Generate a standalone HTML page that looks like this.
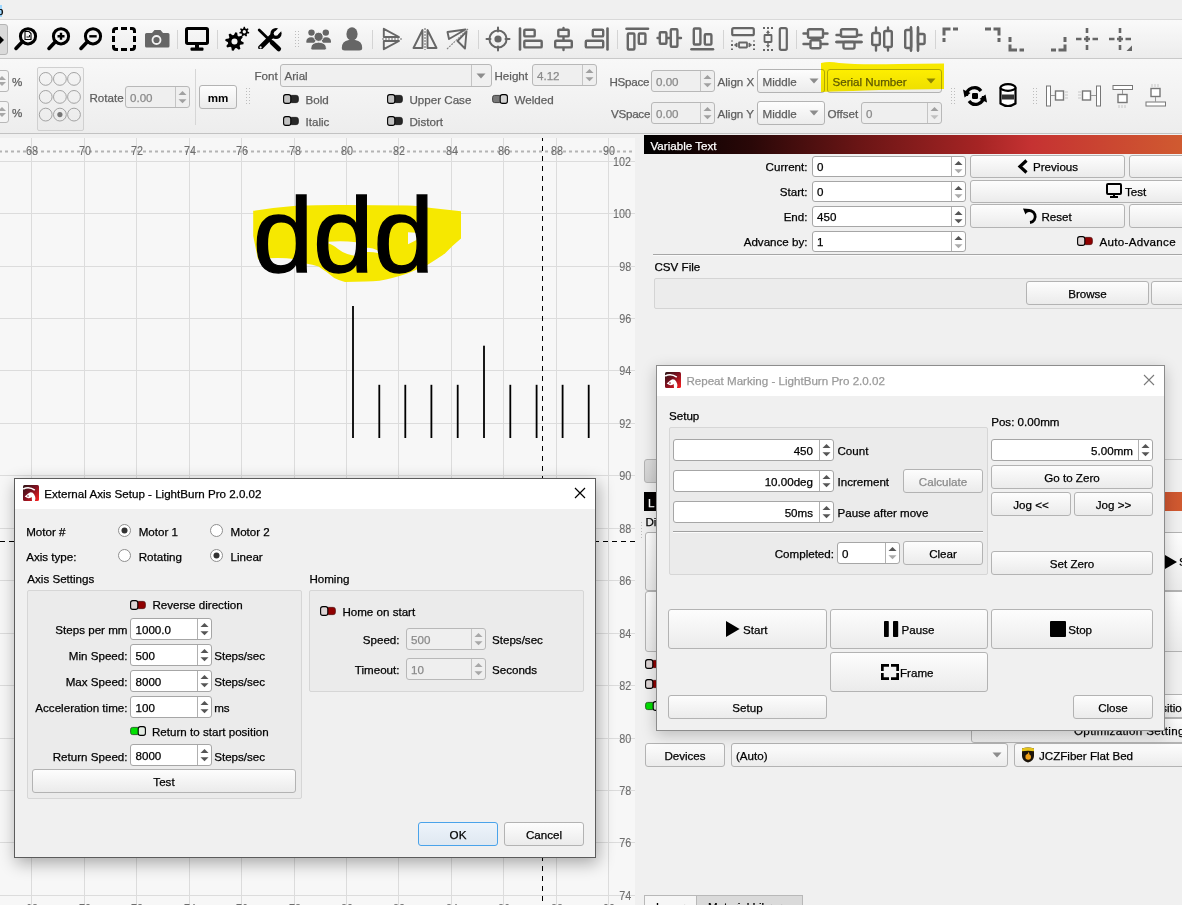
<!DOCTYPE html>
<html><head><meta charset="utf-8"><style>
html,body{margin:0;padding:0;}
body{width:1182px;height:905px;overflow:hidden;position:relative;background:#f0f0f0;font-family:"Liberation Sans", sans-serif;}
.a{position:absolute;display:block;}
.t{position:absolute;white-space:nowrap;font-family:"Liberation Sans", sans-serif;-webkit-text-stroke:0.25px currentColor;}
svg{overflow:visible;}
</style></head><body>
<div class="a" style="left:0px;top:0px;width:1182px;height:19px;background:#f0f0f0;"></div>
<div class="a" style="left:0px;top:5px;width:2px;height:12px;background:#9fd8ff;"></div>
<div class="t" style="top:4.68px;font-size:11.6px;line-height:11.6px;color:#000;left:-3.00px;">p</div>
<div class="a" style="left:0px;top:19px;width:1182px;height:1px;background:#d9d9d9;"></div>
<div class="a" style="left:0px;top:20px;width:1182px;height:38px;background:linear-gradient(#fafafa,#ececec);"></div>
<div class="a" style="left:0px;top:58px;width:1182px;height:1px;background:#c9c9c9;"></div>
<div class="a" style="left:-10px;top:24px;width:18px;height:31px;background:#dadada;border:1px solid #b5b5b5;border-radius:3px;box-sizing:border-box;"></div>
<svg class="a" style="left:0px;top:36px;" width="5" height="8" viewBox="0 0 5 8"><path d="M0 0 L4 4 L0 8 Z" fill="#000"/></svg>
<svg class="a" style="left:12.600000000000001px;top:24px;" width="30" height="30" viewBox="0 0 30 30"><circle cx="15" cy="12.3" r="7.6" fill="none" stroke="#000" stroke-width="3"/><path d="M9.6 17.6 L3 24.4" stroke="#000" stroke-width="3.6" stroke-linecap="round"/><path d="M12 7.5 h4 l2 2 v6 h-6 z" fill="none" stroke="#000" stroke-width="1.1"/><path d="M13.5 13 h3 v-2" fill="none" stroke="#000" stroke-width="0.9"/></svg>
<svg class="a" style="left:45.6px;top:24px;" width="30" height="30" viewBox="0 0 30 30"><circle cx="15" cy="12.3" r="7.6" fill="none" stroke="#000" stroke-width="3"/><path d="M9.6 17.6 L3 24.4" stroke="#000" stroke-width="3.6" stroke-linecap="round"/><path d="M15 8.8 v7 M11.5 12.3 h7" stroke="#000" stroke-width="2.4"/></svg>
<svg class="a" style="left:78.3px;top:24px;" width="30" height="30" viewBox="0 0 30 30"><circle cx="15" cy="12.3" r="7.6" fill="none" stroke="#000" stroke-width="3"/><path d="M9.6 17.6 L3 24.4" stroke="#000" stroke-width="3.6" stroke-linecap="round"/><path d="M11.3 12.3 h7.4" stroke="#000" stroke-width="2.4"/></svg>
<svg class="a" style="left:112px;top:27px;" width="24" height="24" viewBox="0 0 24 24"><path d="M1.5 6 V4 Q1.5 1.5 4 1.5 H6 M9 1.5 H15 M18 1.5 H20 Q22.5 1.5 22.5 4 V6 M22.5 9 V15 M22.5 18 V20 Q22.5 22.5 20 22.5 H18 M15 22.5 H9 M6 22.5 H4 Q1.5 22.5 1.5 20 V18 M1.5 15 V9" fill="none" stroke="#000" stroke-width="3"/></svg>
<svg class="a" style="left:144px;top:28px;" width="26" height="21" viewBox="0 0 26 21"><path d="M2 5 h6 l2.5 -3 h6 l2.5 3 h5 q1.5 0 1.5 1.5 v11.5 q0 1.5 -1.5 1.5 h-21.5 q-1.5 0 -1.5 -1.5 v-11.5 q0 -1.5 1.5 -1.5 z" fill="#666"/><circle cx="12.5" cy="12" r="4" fill="none" stroke="#f4f4f4" stroke-width="1.8"/></svg>
<div class="a" style="left:177px;top:30px;width:1px;height:19px;background:#d4d4d4;"></div>
<svg class="a" style="left:185px;top:27px;" width="24" height="24" viewBox="0 0 24 24"><rect x="1.5" y="1.5" width="21" height="15" rx="1.2" fill="none" stroke="#000" stroke-width="3"/><rect x="10" y="17" width="4" height="4" fill="#000"/><rect x="5.5" y="20.5" width="13" height="3.3" rx="1" fill="#000"/></svg>
<div class="a" style="left:217px;top:30px;width:1px;height:19px;background:#d4d4d4;"></div>
<svg class="a" style="left:225px;top:27px;" width="25" height="24" viewBox="0 0 25 24"><polygon points="18.76,15.51 18.40,17.30 15.32,17.71 14.60,18.79 15.40,21.79 13.88,22.80 11.42,20.92 10.15,21.17 8.59,23.86 6.80,23.50 6.39,20.42 5.31,19.70 2.31,20.50 1.30,18.98 3.18,16.52 2.93,15.25 0.24,13.69 0.60,11.90 3.68,11.49 4.40,10.41 3.60,7.41 5.12,6.40 7.58,8.28 8.85,8.03 10.41,5.34 12.20,5.70 12.61,8.78 13.69,9.50 16.69,8.70 17.70,10.22 15.82,12.68 16.07,13.95" fill="#000"/><circle cx="9.5" cy="14.6" r="3.0" fill="#f3f3f3"/><polygon points="24.27,5.36 24.02,6.45 22.18,6.61 21.70,7.20 21.96,9.03 20.95,9.52 19.68,8.18 18.92,8.18 17.65,9.52 16.64,9.03 16.90,7.20 16.42,6.61 14.58,6.45 14.33,5.36 15.92,4.42 16.09,3.68 15.07,2.14 15.76,1.26 17.49,1.92 18.18,1.59 18.74,-0.17 19.86,-0.17 20.42,1.59 21.11,1.92 22.84,1.26 23.53,2.14 22.51,3.68 22.68,4.42" fill="#000"/><circle cx="19.3" cy="4.8" r="1.7" fill="#f3f3f3"/></svg>
<svg class="a" style="left:257px;top:27px;" width="26" height="24" viewBox="0 0 26 24"><defs><mask id="wm"><rect x="-5" y="-5" width="40" height="40" fill="#fff"/><path d="M19 6.5 L30 -4.5" stroke="#000" stroke-width="4.2"/><circle cx="19" cy="6.5" r="2.3" fill="#000"/></mask></defs><path d="M2.2 3 L14 14.5" stroke="#000" stroke-width="2.8" stroke-linecap="round"/><path d="M15 15.5 L21.8 22" stroke="#000" stroke-width="4.6" stroke-linecap="round"/><g mask="url(#wm)"><path d="M3.5 20.5 L16 8" stroke="#000" stroke-width="4.6" stroke-linecap="round"/><circle cx="19" cy="6.5" r="5.6" fill="#000"/></g><circle cx="3.6" cy="20.4" r="1.1" fill="#f3f3f3"/></svg>
<svg class="a" style="left:295px;top:31px;" width="4" height="17" viewBox="0 0 4 17"><rect x="0" y="0" width="1" height="1" fill="#bdbdbd"/><rect x="3" y="0" width="1" height="1" fill="#bdbdbd"/><rect x="0" y="3" width="1" height="1" fill="#bdbdbd"/><rect x="3" y="3" width="1" height="1" fill="#bdbdbd"/><rect x="0" y="6" width="1" height="1" fill="#bdbdbd"/><rect x="3" y="6" width="1" height="1" fill="#bdbdbd"/><rect x="0" y="9" width="1" height="1" fill="#bdbdbd"/><rect x="3" y="9" width="1" height="1" fill="#bdbdbd"/><rect x="0" y="12" width="1" height="1" fill="#bdbdbd"/><rect x="3" y="12" width="1" height="1" fill="#bdbdbd"/><rect x="0" y="15" width="1" height="1" fill="#bdbdbd"/><rect x="3" y="15" width="1" height="1" fill="#bdbdbd"/></svg>
<svg class="a" style="left:306px;top:28px;" width="26" height="22" viewBox="0 0 26 22"><circle cx="5.5" cy="4.6" r="3.2" fill="#666"/><path d="M0.3 13.5 q0-4 5-4.2 q3.8 0 4.5 3 l-1.5 2.5 h-7.6 q-.5 0-.4-1.3z" fill="#666"/><circle cx="19.8" cy="4.6" r="3.2" fill="#666"/><path d="M25 13.5 q0-4-5-4.2 q-3.8 0-4.5 3 l1.5 2.5 h7.6 q.5 0 .4-1.3z" fill="#666"/><circle cx="12.6" cy="8.8" r="4.6" fill="#666" stroke="#f4f4f4" stroke-width="1"/><path d="M4.8 20.5 q0-6 7.8-6.3 q7.8 .3 7.8 6.3 q0 1.5-2 1.5 h-11.6 q-2 0-2-1.5z" fill="#666" stroke="#f4f4f4" stroke-width="0.8"/></svg>
<svg class="a" style="left:341px;top:27px;" width="22" height="24" viewBox="0 0 22 24"><ellipse cx="11" cy="7" rx="5.6" ry="6.8" fill="#666"/><path d="M0.8 21 q0-7 7-8 h6.4 q7 1 7 8 q0 2.5-3 2.5 h-14.4 q-3 0-3-2.5z" fill="#666"/></svg>
<div class="a" style="left:372px;top:30px;width:1px;height:19px;background:#d4d4d4;"></div>
<svg class="a" style="left:382px;top:27px;" width="21" height="24" viewBox="0 0 21 24"><path d="M1.8 1.8 L17 10 H1.8 Z" fill="none" stroke="#666" stroke-width="1.9" stroke-linejoin="round"/><path d="M1.8 22.2 L17 14 H1.8 Z" fill="none" stroke="#666" stroke-width="1.9" stroke-linejoin="round"/><path d="M0 12 H20" stroke="#999" stroke-width="1.6" stroke-dasharray="2 1"/></svg>
<svg class="a" style="left:412px;top:28px;" width="26" height="22" viewBox="0 0 26 22"><path d="M10.5 2 V20 H1.5 Z" fill="none" stroke="#666" stroke-width="1.9" stroke-linejoin="round"/><path d="M15.5 2 V20 H24.5 Z" fill="none" stroke="#666" stroke-width="1.9" stroke-linejoin="round"/><path d="M13 0 V22" stroke="#999" stroke-width="1.6" stroke-dasharray="2 1"/></svg>
<svg class="a" style="left:446px;top:28px;" width="24" height="22" viewBox="0 0 24 22"><path d="M1.5 4 L19.5 1.5 L3 11 Z" fill="none" stroke="#666" stroke-width="1.9" stroke-linejoin="round"/><path d="M20.5 3.5 L11.5 13 L19 20.5 Z" fill="none" stroke="#666" stroke-width="1.9" stroke-linejoin="round"/><path d="M1 21 L22 1" stroke="#888" stroke-width="1.1" stroke-dasharray="2 1"/></svg>
<div class="a" style="left:478px;top:30px;width:1px;height:19px;background:#d4d4d4;"></div>
<svg class="a" style="left:486px;top:27px;" width="24" height="24" viewBox="0 0 24 24"><circle cx="12" cy="12" r="8.6" fill="none" stroke="#666" stroke-width="2"/><circle cx="12" cy="12" r="3.6" fill="#666"/><path d="M12 0.5 V4.5 M12 19.5 V23.5 M0.5 12 H4.5 M19.5 12 H23.5" stroke="#666" stroke-width="2" stroke-linecap="round"/></svg>
<svg class="a" style="left:518px;top:27px;" width="26" height="24" viewBox="0 0 26 24"><path d="M2 1.5 V22.5" stroke="#666" stroke-width="2.6" stroke-linecap="round"/><rect x="6.3" y="2.8" width="10.4" height="6.6" rx="1" fill="none" stroke="#666" stroke-width="2.4"/><rect x="6.3" y="13.8" width="17.4" height="6.6" rx="1" fill="none" stroke="#666" stroke-width="2.4"/></svg>
<svg class="a" style="left:554px;top:27px;" width="20" height="24" viewBox="0 0 20 24"><path d="M9.5 1 V23" stroke="#666" stroke-width="2.4" stroke-linecap="round"/><rect x="4.3" y="2.8" width="10.4" height="6.6" rx="1" fill="#f3f3f3" stroke="#666" stroke-width="2.4"/><rect x="1.2" y="13.8" width="16.6" height="6.6" rx="1" fill="#f3f3f3" stroke="#666" stroke-width="2.4"/></svg>
<svg class="a" style="left:584px;top:27px;" width="26" height="24" viewBox="0 0 26 24"><path d="M23.5 1.5 V22.5" stroke="#666" stroke-width="2.6" stroke-linecap="round"/><rect x="8.8" y="2.8" width="10.4" height="6.6" rx="1" fill="none" stroke="#666" stroke-width="2.4"/><rect x="1.8" y="13.8" width="17.4" height="6.6" rx="1" fill="none" stroke="#666" stroke-width="2.4"/></svg>
<div class="a" style="left:617px;top:30px;width:1px;height:19px;background:#d4d4d4;"></div>
<svg class="a" style="left:625px;top:27px;" width="25" height="24" viewBox="0 0 25 24"><path d="M1.5 1.8 H23" stroke="#666" stroke-width="2.6" stroke-linecap="round"/><rect x="2.8" y="6.5" width="6.6" height="16" rx="1" fill="none" stroke="#666" stroke-width="2.4"/><rect x="13.8" y="6.5" width="6.6" height="10.4" rx="1" fill="none" stroke="#666" stroke-width="2.4"/></svg>
<svg class="a" style="left:657px;top:28px;" width="25" height="21" viewBox="0 0 25 21"><path d="M0.5 10 H24" stroke="#666" stroke-width="2.4" stroke-linecap="round"/><rect x="2.8" y="4.2" width="6.6" height="11.6" rx="1" fill="#f3f3f3" stroke="#666" stroke-width="2.4"/><rect x="13.8" y="1.2" width="6.6" height="17.6" rx="1" fill="#f3f3f3" stroke="#666" stroke-width="2.4"/></svg>
<svg class="a" style="left:690px;top:27px;" width="25" height="24" viewBox="0 0 25 24"><path d="M1.5 22.2 H23" stroke="#666" stroke-width="2.6" stroke-linecap="round"/><rect x="3.8" y="1.5" width="6.6" height="16" rx="1" fill="none" stroke="#666" stroke-width="2.4"/><rect x="14.8" y="7.2" width="6.6" height="10.4" rx="1" fill="none" stroke="#666" stroke-width="2.4"/></svg>
<div class="a" style="left:723px;top:30px;width:1px;height:19px;background:#d4d4d4;"></div>
<svg class="a" style="left:731px;top:27px;" width="24" height="24" viewBox="0 0 24 24"><rect x="1.2" y="1.2" width="21.6" height="7" rx="1.5" fill="none" stroke="#666" stroke-width="2.2"/><rect x="8" y="15.5" width="8" height="5" rx="0.5" fill="none" stroke="#666" stroke-width="1.8"/><path d="M1 13.5 V14.5 M1 17 V19 M1 21.5 V23 M23 13.5 V14.5 M23 17 V19 M23 21.5 V23" stroke="#666" stroke-width="2"/><path d="M3.5 18 L6 16 V20 Z M20.5 18 L18 16 V20 Z" fill="#666" stroke="#666" stroke-width="1"/></svg>
<svg class="a" style="left:763px;top:27px;" width="25" height="24" viewBox="0 0 25 24"><rect x="16.8" y="1.2" width="7" height="21.6" rx="1.5" fill="none" stroke="#666" stroke-width="2.2"/><rect x="1.5" y="8" width="7" height="7" rx="0.5" fill="none" stroke="#666" stroke-width="1.8"/><path d="M0 1 H2 M4 1 H6 M8 1 H10 M0 23 H2 M4 23 H6 M8 23 H10" stroke="#666" stroke-width="2"/><path d="M5 3 L3 6 H7 Z M5 21 L3 18 H7 Z" fill="#666"/><path d="M5 5 V8 M5 15 V19" stroke="#666" stroke-width="1.4"/></svg>
<div class="a" style="left:796px;top:30px;width:1px;height:19px;background:#d4d4d4;"></div>
<svg class="a" style="left:803px;top:28px;" width="25" height="22" viewBox="0 0 25 22"><path d="M0.5 5.5 H24.5 M0.5 16 H24.5" stroke="#666" stroke-width="2.4" stroke-linecap="round"/><rect x="5" y="1.2" width="15" height="8.6" rx="1.5" fill="#f3f3f3" stroke="#666" stroke-width="2.4"/><rect x="7.5" y="12.2" width="10" height="8" rx="1.5" fill="#f3f3f3" stroke="#666" stroke-width="2.4"/></svg>
<svg class="a" style="left:836px;top:28px;" width="26" height="22" viewBox="0 0 26 22"><path d="M0.5 7 H25.5 M0.5 14 H25.5" stroke="#666" stroke-width="2.4" stroke-linecap="round"/><rect x="5" y="1.2" width="16" height="7.6" rx="1.5" fill="#f3f3f3" stroke="#666" stroke-width="2.4"/><rect x="7.5" y="14" width="11" height="6.6" rx="1.5" fill="#f3f3f3" stroke="#666" stroke-width="2.4"/><path d="M0.5 14 H25.5" stroke="#666" stroke-width="2.4" stroke-linecap="round"/></svg>
<svg class="a" style="left:871px;top:27px;" width="23" height="24" viewBox="0 0 23 24"><path d="M5 0.5 V23.5 M17 0.5 V23.5" stroke="#666" stroke-width="2.4" stroke-linecap="round"/><rect x="1.2" y="6" width="7.6" height="12" rx="1.5" fill="#f3f3f3" stroke="#666" stroke-width="2.4"/><rect x="13.2" y="4" width="7.6" height="16" rx="1.5" fill="#f3f3f3" stroke="#666" stroke-width="2.4"/></svg>
<svg class="a" style="left:904px;top:27px;" width="23" height="24" viewBox="0 0 23 24"><path d="M7 0.5 V23.5 M14 0.5 V23.5" stroke="#666" stroke-width="2.4" stroke-linecap="round"/><rect x="1.2" y="3" width="6" height="18" rx="1.5" fill="#f3f3f3" stroke="#666" stroke-width="2.4"/><rect x="14" y="7" width="6.6" height="10" rx="1.5" fill="#f3f3f3" stroke="#666" stroke-width="2.4"/><path d="M7 0.5 V23.5 M14 0.5 V23.5" stroke="#666" stroke-width="2.4" stroke-linecap="round"/></svg>
<div class="a" style="left:935px;top:30px;width:1px;height:19px;background:#d4d4d4;"></div>
<svg class="a" style="left:942px;top:27px;" width="17" height="16" viewBox="0 0 17 16"><path d="M2 15 V11 M2 8.5 V2 H8.5 M11 2 H16" stroke="#666" stroke-width="3" fill="none"/></svg>
<svg class="a" style="left:984px;top:27px;" width="17" height="16" viewBox="0 0 17 16"><path d="M1 2 H7 M9.5 2 H15 V8.5 M15 11 V15" stroke="#666" stroke-width="3" fill="none"/></svg>
<svg class="a" style="left:1008px;top:36px;" width="17" height="16" viewBox="0 0 17 16"><path d="M2 1 V6 M2 8.5 V14 H9 M11.5 14 H16" stroke="#666" stroke-width="3" fill="none"/></svg>
<svg class="a" style="left:1050px;top:36px;" width="17" height="16" viewBox="0 0 17 16"><path d="M15 1 V6 M15 8.5 V14 H8.5 M6 14 H1" stroke="#666" stroke-width="3" fill="none"/></svg>
<svg class="a" style="left:1075px;top:27px;" width="24" height="24" viewBox="0 0 24 24"><path d="M12 1 V6 M12 9 V15 M12 18 V23 M1 12 H6.5 M9 12 H15 M17.5 12 H23" stroke="#666" stroke-width="2.6" fill="none"/></svg>
<svg class="a" style="left:1108px;top:27px;" width="25" height="24" viewBox="0 0 25 24"><path d="M12 1 V6 M12 9 V15 M12 18 V23 M1 12 H6.5 M9 12 H15 M17.5 12 H23" stroke="#666" stroke-width="2.6" fill="none"/><path d="M24 18.5 V24 H18.5 Z" fill="#666"/></svg>
<div class="a" style="left:0px;top:59px;width:1182px;height:74px;background:linear-gradient(#f8f8f8,#ededed);"></div>
<div class="a" style="left:0px;top:133px;width:1182px;height:1px;background:#c2c2c2;"></div>
<div class="a" style="left:0px;top:134px;width:1182px;height:4px;background:#f0f0f0;"></div>
<div class="a" style="left:-40px;top:70px;width:49px;height:22px;background:#f4f4f4;border:1px solid #b8b8b8;border-radius:3px;box-sizing:border-box;"></div>
<svg class="a" style="left:-2px;top:75px;" width="8" height="12" viewBox="0 0 8 12"><path d="M0 5 L4 1 L8 5 Z M0 7 L8 7 L4 11 Z" fill="#a8a8a8"/></svg>
<div class="t" style="top:76.18px;font-size:11.6px;line-height:11.6px;color:#5e5e5e;left:12.00px;">%</div>
<div class="a" style="left:-40px;top:101px;width:49px;height:22px;background:#f4f4f4;border:1px solid #b8b8b8;border-radius:3px;box-sizing:border-box;"></div>
<svg class="a" style="left:-2px;top:106px;" width="8" height="12" viewBox="0 0 8 12"><path d="M0 5 L4 1 L8 5 Z M0 7 L8 7 L4 11 Z" fill="#a8a8a8"/></svg>
<div class="t" style="top:107.18px;font-size:11.6px;line-height:11.6px;color:#5e5e5e;left:12.00px;">%</div>
<div class="a" style="left:37px;top:67px;width:47px;height:64px;background:linear-gradient(#f4f4f4,#ebebeb);border:1px solid #d0d0d0;border-radius:2px;box-sizing:border-box;"></div>
<svg class="a" style="left:37px;top:67px;" width="47" height="64" viewBox="0 0 47 64"><circle cx="8.7" cy="11.9" r="6.4" fill="none" stroke="#9a9a9a" stroke-width="0.9"/><circle cx="22.9" cy="11.9" r="6.4" fill="none" stroke="#9a9a9a" stroke-width="0.9"/><circle cx="37" cy="11.9" r="6.4" fill="none" stroke="#9a9a9a" stroke-width="0.9"/><circle cx="8.7" cy="29.9" r="6.4" fill="none" stroke="#9a9a9a" stroke-width="0.9"/><circle cx="22.9" cy="29.9" r="6.4" fill="none" stroke="#9a9a9a" stroke-width="0.9"/><circle cx="37" cy="29.9" r="6.4" fill="none" stroke="#9a9a9a" stroke-width="0.9"/><circle cx="8.7" cy="47.6" r="6.4" fill="none" stroke="#9a9a9a" stroke-width="0.9"/><circle cx="22.9" cy="47.6" r="6.4" fill="none" stroke="#9a9a9a" stroke-width="0.9"/><circle cx="37" cy="47.6" r="6.4" fill="none" stroke="#9a9a9a" stroke-width="0.9"/><circle cx="22.9" cy="47.6" r="2.6" fill="#777"/></svg>
<div class="t" style="top:92.18px;font-size:11.6px;line-height:11.6px;color:#5e5e5e;left:89.50px;">Rotate</div>
<div class="a" style="left:125px;top:86px;width:65px;height:22px;background:#efefef;border:1px solid #b8b8b8;border-radius:3px;box-sizing:border-box;"></div>
<div class="a" style="left:175px;top:87px;width:1px;height:20px;background:#c4c4c4;"></div>
<svg class="a" style="left:178.0px;top:91.0px;" width="9" height="12" viewBox="0 0 9 12"><path d="M0.5 4 L4.5 0 L8.5 4 Z" fill="#a0a0a0"/><path d="M0.5 8.3 L8.5 8.3 L4.5 12.3 Z" fill="#a0a0a0"/></svg>
<div class="t" style="top:91.68px;font-size:11.6px;line-height:11.6px;color:#8a8a8a;left:130.00px;">0.00</div>
<div class="a" style="left:195px;top:69px;width:1px;height:56px;background:#d6d6d6;"></div>
<div class="a" style="left:199px;top:85px;width:38px;height:24px;background:linear-gradient(#fdfdfd,#ebebeb);border:1px solid #b3b3b3;border-radius:3px;box-sizing:border-box;"></div>
<div class="t" style="top:91.68px;font-size:11.6px;line-height:11.6px;color:#000;font-weight:bold;left:-82.00px;width:600px;text-align:center;-webkit-text-stroke:0;">mm</div>
<svg class="a" style="left:246px;top:88px;" width="4" height="17" viewBox="0 0 4 17"><rect x="0" y="0" width="1" height="1" fill="#bdbdbd"/><rect x="3" y="0" width="1" height="1" fill="#bdbdbd"/><rect x="0" y="3" width="1" height="1" fill="#bdbdbd"/><rect x="3" y="3" width="1" height="1" fill="#bdbdbd"/><rect x="0" y="6" width="1" height="1" fill="#bdbdbd"/><rect x="3" y="6" width="1" height="1" fill="#bdbdbd"/><rect x="0" y="9" width="1" height="1" fill="#bdbdbd"/><rect x="3" y="9" width="1" height="1" fill="#bdbdbd"/><rect x="0" y="12" width="1" height="1" fill="#bdbdbd"/><rect x="3" y="12" width="1" height="1" fill="#bdbdbd"/><rect x="0" y="15" width="1" height="1" fill="#bdbdbd"/><rect x="3" y="15" width="1" height="1" fill="#bdbdbd"/></svg>
<div class="t" style="top:69.88px;font-size:11.6px;line-height:11.6px;color:#5e5e5e;left:254.50px;">Font</div>
<div class="a" style="left:280px;top:64px;width:212px;height:23px;background:#f0f0f0;border:1px solid #b8b8b8;border-radius:3px;box-sizing:border-box;"></div>
<div class="a" style="left:471px;top:65px;width:1px;height:21px;background:#c4c4c4;"></div>
<svg class="a" style="left:476px;top:72.5px;" width="10" height="6" viewBox="0 0 10 6"><path d="M0.5 0.5 L9.5 0.5 L5 5.5 Z" fill="#8c8c8c"/></svg>
<div class="t" style="top:70.18px;font-size:11.6px;line-height:11.6px;color:#5e5e5e;left:284.50px;">Arial</div>
<div class="t" style="top:69.88px;font-size:11.6px;line-height:11.6px;color:#5e5e5e;left:494.50px;">Height</div>
<div class="a" style="left:532px;top:64px;width:65px;height:22px;background:#efefef;border:1px solid #b8b8b8;border-radius:3px;box-sizing:border-box;"></div>
<div class="a" style="left:582px;top:65px;width:1px;height:20px;background:#c4c4c4;"></div>
<svg class="a" style="left:585.0px;top:69.0px;" width="9" height="12" viewBox="0 0 9 12"><path d="M0.5 4 L4.5 0 L8.5 4 Z" fill="#a0a0a0"/><path d="M0.5 8.3 L8.5 8.3 L4.5 12.3 Z" fill="#a0a0a0"/></svg>
<div class="t" style="top:69.68px;font-size:11.6px;line-height:11.6px;color:#8a8a8a;left:537.00px;">4.12</div>
<svg class="a" style="left:283px;top:94px;" width="16" height="10" viewBox="0 0 16 10"><rect x="6.5" y="1.4" width="8.8" height="7.2" rx="2" fill="#282828" stroke="#1a1a1a" stroke-width="0.9"/><rect x="0.6" y="0.6" width="7.2" height="8.8" rx="2.2" fill="#c2c2c2" stroke="#000" stroke-width="1.1"/></svg>
<div class="t" style="top:93.68px;font-size:11.6px;line-height:11.6px;color:#5e5e5e;left:305.50px;">Bold</div>
<svg class="a" style="left:283px;top:116px;" width="16" height="10" viewBox="0 0 16 10"><rect x="6.5" y="1.4" width="8.8" height="7.2" rx="2" fill="#282828" stroke="#1a1a1a" stroke-width="0.9"/><rect x="0.6" y="0.6" width="7.2" height="8.8" rx="2.2" fill="#c2c2c2" stroke="#000" stroke-width="1.1"/></svg>
<div class="t" style="top:115.68px;font-size:11.6px;line-height:11.6px;color:#5e5e5e;left:305.50px;">Italic</div>
<svg class="a" style="left:387px;top:94px;" width="16" height="10" viewBox="0 0 16 10"><rect x="6.5" y="1.4" width="8.8" height="7.2" rx="2" fill="#282828" stroke="#1a1a1a" stroke-width="0.9"/><rect x="0.6" y="0.6" width="7.2" height="8.8" rx="2.2" fill="#c2c2c2" stroke="#000" stroke-width="1.1"/></svg>
<div class="t" style="top:93.68px;font-size:11.6px;line-height:11.6px;color:#5e5e5e;left:409.50px;">Upper Case</div>
<svg class="a" style="left:387px;top:116px;" width="16" height="10" viewBox="0 0 16 10"><rect x="6.5" y="1.4" width="8.8" height="7.2" rx="2" fill="#282828" stroke="#1a1a1a" stroke-width="0.9"/><rect x="0.6" y="0.6" width="7.2" height="8.8" rx="2.2" fill="#c2c2c2" stroke="#000" stroke-width="1.1"/></svg>
<div class="t" style="top:115.68px;font-size:11.6px;line-height:11.6px;color:#5e5e5e;left:409.50px;">Distort</div>
<svg class="a" style="left:492px;top:94px;" width="16" height="10" viewBox="0 0 16 10"><rect x="0.6" y="1.4" width="8.8" height="7.2" rx="2" fill="#777" stroke="#333" stroke-width="0.9"/><rect x="8.2" y="0.6" width="7.2" height="8.8" rx="2.2" fill="#d4d4d4" stroke="#000" stroke-width="1.1"/></svg>
<div class="t" style="top:93.68px;font-size:11.6px;line-height:11.6px;color:#5e5e5e;left:514.50px;">Welded</div>
<div class="t" style="top:76.18px;font-size:11.6px;line-height:11.6px;color:#5e5e5e;letter-spacing:-0.25px;left:609.50px;">HSpace</div>
<div class="a" style="left:651px;top:70px;width:64px;height:22px;background:#efefef;border:1px solid #b8b8b8;border-radius:3px;box-sizing:border-box;"></div>
<div class="a" style="left:700px;top:71px;width:1px;height:20px;background:#c4c4c4;"></div>
<svg class="a" style="left:703.0px;top:75.0px;" width="9" height="12" viewBox="0 0 9 12"><path d="M0.5 4 L4.5 0 L8.5 4 Z" fill="#a0a0a0"/><path d="M0.5 8.3 L8.5 8.3 L4.5 12.3 Z" fill="#a0a0a0"/></svg>
<div class="t" style="top:75.68px;font-size:11.6px;line-height:11.6px;color:#8a8a8a;left:656.00px;">0.00</div>
<div class="t" style="top:107.88px;font-size:11.6px;line-height:11.6px;color:#5e5e5e;letter-spacing:-0.25px;left:611.00px;">VSpace</div>
<div class="a" style="left:651px;top:102px;width:64px;height:22px;background:#efefef;border:1px solid #b8b8b8;border-radius:3px;box-sizing:border-box;"></div>
<div class="a" style="left:700px;top:103px;width:1px;height:20px;background:#c4c4c4;"></div>
<svg class="a" style="left:703.0px;top:107.0px;" width="9" height="12" viewBox="0 0 9 12"><path d="M0.5 4 L4.5 0 L8.5 4 Z" fill="#a0a0a0"/><path d="M0.5 8.3 L8.5 8.3 L4.5 12.3 Z" fill="#a0a0a0"/></svg>
<div class="t" style="top:107.68px;font-size:11.6px;line-height:11.6px;color:#8a8a8a;left:656.00px;">0.00</div>
<div class="t" style="top:76.18px;font-size:11.6px;line-height:11.6px;color:#5e5e5e;left:717.50px;">Align X</div>
<div class="a" style="left:757px;top:69px;width:68px;height:24px;background:linear-gradient(#fdfdfd,#ececec);border:1px solid #b3b3b3;border-radius:3px;box-sizing:border-box;"></div>
<svg class="a" style="left:808.5px;top:78.0px;" width="10" height="6" viewBox="0 0 10 6"><path d="M0.5 0.5 L9.5 0.5 L5 5.5 Z" fill="#8c8c8c"/></svg>
<div class="t" style="top:75.68px;font-size:11.6px;line-height:11.6px;color:#5e5e5e;left:762.50px;">Middle</div>
<div class="t" style="top:107.88px;font-size:11.6px;line-height:11.6px;color:#5e5e5e;left:717.50px;">Align Y</div>
<div class="a" style="left:757px;top:101px;width:68px;height:24px;background:linear-gradient(#fdfdfd,#ececec);border:1px solid #b3b3b3;border-radius:3px;box-sizing:border-box;"></div>
<svg class="a" style="left:808.5px;top:110.0px;" width="10" height="6" viewBox="0 0 10 6"><path d="M0.5 0.5 L9.5 0.5 L5 5.5 Z" fill="#8c8c8c"/></svg>
<div class="t" style="top:107.68px;font-size:11.6px;line-height:11.6px;color:#5e5e5e;left:762.50px;">Middle</div>
<div class="t" style="top:107.68px;font-size:11.6px;line-height:11.6px;color:#5e5e5e;left:827.50px;">Offset</div>
<div class="a" style="left:861px;top:102px;width:81px;height:22px;background:#efefef;border:1px solid #b8b8b8;border-radius:3px;box-sizing:border-box;"></div>
<div class="a" style="left:927px;top:103px;width:1px;height:20px;background:#c4c4c4;"></div>
<svg class="a" style="left:930.0px;top:107.0px;" width="9" height="12" viewBox="0 0 9 12"><path d="M0.5 4 L4.5 0 L8.5 4 Z" fill="#a0a0a0"/><path d="M0.5 8.3 L8.5 8.3 L4.5 12.3 Z" fill="#c0c0c0"/></svg>
<div class="t" style="top:107.68px;font-size:11.6px;line-height:11.6px;color:#8a8a8a;left:866.00px;">0</div>
<div class="a" style="left:827px;top:69px;width:115px;height:24px;background:linear-gradient(#fdfdfd,#ececec);border:1px solid #b3b3b3;border-radius:3px;box-sizing:border-box;"></div>
<svg class="a" style="left:925.5px;top:78.0px;" width="10" height="6" viewBox="0 0 10 6"><path d="M0.5 0.5 L9.5 0.5 L5 5.5 Z" fill="#8c8c8c"/></svg>
<div class="t" style="top:75.68px;font-size:11.6px;line-height:11.6px;color:#5e5e5e;left:832.50px;">Serial Number</div>
<svg class="a" style="left:819px;top:60px;mix-blend-mode:multiply;" width="128" height="34" viewBox="0 0 128 34"><path d="M2 3 Q10 1 20 3 Q40 5 80 4 L125 3.5 L125 29 L60 30 Q30 31 15 31.5 L2 32 Z" fill="#fff000"/></svg>
<svg class="a" style="left:951px;top:88px;" width="4" height="17" viewBox="0 0 4 17"><rect x="0" y="0" width="1" height="1" fill="#bdbdbd"/><rect x="3" y="0" width="1" height="1" fill="#bdbdbd"/><rect x="0" y="3" width="1" height="1" fill="#bdbdbd"/><rect x="3" y="3" width="1" height="1" fill="#bdbdbd"/><rect x="0" y="6" width="1" height="1" fill="#bdbdbd"/><rect x="3" y="6" width="1" height="1" fill="#bdbdbd"/><rect x="0" y="9" width="1" height="1" fill="#bdbdbd"/><rect x="3" y="9" width="1" height="1" fill="#bdbdbd"/><rect x="0" y="12" width="1" height="1" fill="#bdbdbd"/><rect x="3" y="12" width="1" height="1" fill="#bdbdbd"/><rect x="0" y="15" width="1" height="1" fill="#bdbdbd"/><rect x="3" y="15" width="1" height="1" fill="#bdbdbd"/></svg>
<svg class="a" style="left:962px;top:84px;" width="26" height="24" viewBox="0 0 26 24"><path d="M4.5 12 A8 8 0 0 1 19 7" fill="none" stroke="#000" stroke-width="3.2"/><path d="M21.5 12 A8 8 0 0 1 7 17" fill="none" stroke="#000" stroke-width="3.2"/><path d="M1 5.5 L8.5 9 L2.5 13.5 Z" fill="#000"/><path d="M25 18.5 L17.5 15 L23.5 10.5 Z" fill="#000"/><rect x="10" y="9" width="6" height="6" rx="1.2" fill="#000"/></svg>
<svg class="a" style="left:999px;top:83px;" width="18" height="25" viewBox="0 0 18 25"><path d="M1.5 4.5 V20.5 Q9 25.5 16.5 20.5 V4.5" fill="#fff" stroke="#000" stroke-width="2.2"/><ellipse cx="9" cy="4.5" rx="7.5" ry="3.3" fill="#fff" stroke="#000" stroke-width="2.2"/><rect x="3" y="11.5" width="12" height="5" fill="#333"/></svg>
<svg class="a" style="left:1033px;top:88px;" width="4" height="17" viewBox="0 0 4 17"><rect x="0" y="0" width="1" height="1" fill="#bdbdbd"/><rect x="3" y="0" width="1" height="1" fill="#bdbdbd"/><rect x="0" y="3" width="1" height="1" fill="#bdbdbd"/><rect x="3" y="3" width="1" height="1" fill="#bdbdbd"/><rect x="0" y="6" width="1" height="1" fill="#bdbdbd"/><rect x="3" y="6" width="1" height="1" fill="#bdbdbd"/><rect x="0" y="9" width="1" height="1" fill="#bdbdbd"/><rect x="3" y="9" width="1" height="1" fill="#bdbdbd"/><rect x="0" y="12" width="1" height="1" fill="#bdbdbd"/><rect x="3" y="12" width="1" height="1" fill="#bdbdbd"/><rect x="0" y="15" width="1" height="1" fill="#bdbdbd"/><rect x="3" y="15" width="1" height="1" fill="#bdbdbd"/></svg>
<svg class="a" style="left:1045px;top:85px;" width="24" height="22" viewBox="0 0 24 22"><rect x="1.5" y="1" width="4" height="20" fill="#fff" stroke="#777" stroke-width="1"/><rect x="10.5" y="6" width="8" height="9" fill="#fff" stroke="#777" stroke-width="1.4"/><path d="M6 10.5 H10" stroke="#999"/><path d="M20 7 H23 M20 10 H23 M20 13 H23" stroke="#bbb" stroke-width="0.8"/></svg>
<svg class="a" style="left:1078px;top:85px;" width="24" height="22" viewBox="0 0 24 22"><rect x="18.5" y="1" width="4" height="20" fill="#fff" stroke="#777" stroke-width="1"/><rect x="4.5" y="6" width="8" height="9" fill="#fff" stroke="#777" stroke-width="1.4"/><path d="M13 10.5 H18" stroke="#999"/><path d="M0 7 H3 M0 10 H3 M0 13 H3" stroke="#bbb" stroke-width="0.8"/></svg>
<svg class="a" style="left:1112px;top:84px;" width="22" height="25" viewBox="0 0 22 25"><rect x="1" y="1.5" width="19.5" height="4" fill="#fff" stroke="#777" stroke-width="1"/><rect x="6" y="10.5" width="9" height="8" fill="#fff" stroke="#777" stroke-width="1.4"/><path d="M10.5 6 V10" stroke="#999"/><path d="M7 21 V24 M10 21 V24 M13 21 V24" stroke="#bbb" stroke-width="0.8"/></svg>
<svg class="a" style="left:1145px;top:84px;" width="22" height="24" viewBox="0 0 22 24"><rect x="1" y="18" width="19.5" height="4" fill="#fff" stroke="#777" stroke-width="1"/><rect x="6" y="4.5" width="9" height="8" fill="#fff" stroke="#777" stroke-width="1.4"/><path d="M10.5 13 V18" stroke="#999"/><path d="M7 0 V3 M10 0 V3 M13 0 V3" stroke="#bbb" stroke-width="0.8"/></svg>
<div class="a" style="left:0px;top:138px;width:635px;height:767px;background:#f7f7f7;"></div>
<svg class="a" style="left:0px;top:138px;" width="635" height="767" viewBox="0 0 635 767"><rect x="31" y="0" width="1" height="767" fill="#dcdcdc"/><rect x="84" y="0" width="1" height="767" fill="#dcdcdc"/><rect x="136" y="0" width="1" height="767" fill="#dcdcdc"/><rect x="189" y="0" width="1" height="767" fill="#dcdcdc"/><rect x="241" y="0" width="1" height="767" fill="#dcdcdc"/><rect x="294" y="0" width="1" height="767" fill="#dcdcdc"/><rect x="346" y="0" width="1" height="767" fill="#dcdcdc"/><rect x="398" y="0" width="1" height="767" fill="#dcdcdc"/><rect x="451" y="0" width="1" height="767" fill="#dcdcdc"/><rect x="503" y="0" width="1" height="767" fill="#dcdcdc"/><rect x="556" y="0" width="1" height="767" fill="#dcdcdc"/><rect x="608" y="0" width="1" height="767" fill="#dcdcdc"/><rect x="0" y="23" width="635" height="1" fill="#dcdcdc"/><rect x="0" y="75" width="635" height="1" fill="#dcdcdc"/><rect x="0" y="128" width="635" height="1" fill="#dcdcdc"/><rect x="0" y="180" width="635" height="1" fill="#dcdcdc"/><rect x="0" y="232" width="635" height="1" fill="#dcdcdc"/><rect x="0" y="285" width="635" height="1" fill="#dcdcdc"/><rect x="0" y="337" width="635" height="1" fill="#dcdcdc"/><rect x="0" y="390" width="635" height="1" fill="#dcdcdc"/><rect x="0" y="442" width="635" height="1" fill="#dcdcdc"/><rect x="0" y="495" width="635" height="1" fill="#dcdcdc"/><rect x="0" y="547" width="635" height="1" fill="#dcdcdc"/><rect x="0" y="600" width="635" height="1" fill="#dcdcdc"/><rect x="0" y="652" width="635" height="1" fill="#dcdcdc"/><rect x="0" y="704" width="635" height="1" fill="#dcdcdc"/><rect x="0" y="757" width="635" height="1" fill="#dcdcdc"/><path d="M0 13.5 H635" stroke="#b4b4b4" stroke-width="2" stroke-dasharray="3 3" stroke-dashoffset="1"/></svg>
<div class="t" style="top:144.84px;font-size:12px;line-height:12px;color:#6e6e6e;left:-268.50px;width:600px;text-align:center;-webkit-text-stroke:0.1px #6e6e6e;transform:scaleX(0.9);">68</div>
<div class="t" style="top:144.84px;font-size:12px;line-height:12px;color:#6e6e6e;left:-215.50px;width:600px;text-align:center;-webkit-text-stroke:0.1px #6e6e6e;transform:scaleX(0.9);">70</div>
<div class="t" style="top:144.84px;font-size:12px;line-height:12px;color:#6e6e6e;left:-163.50px;width:600px;text-align:center;-webkit-text-stroke:0.1px #6e6e6e;transform:scaleX(0.9);">72</div>
<div class="t" style="top:144.84px;font-size:12px;line-height:12px;color:#6e6e6e;left:-110.50px;width:600px;text-align:center;-webkit-text-stroke:0.1px #6e6e6e;transform:scaleX(0.9);">74</div>
<div class="t" style="top:144.84px;font-size:12px;line-height:12px;color:#6e6e6e;left:-58.50px;width:600px;text-align:center;-webkit-text-stroke:0.1px #6e6e6e;transform:scaleX(0.9);">76</div>
<div class="t" style="top:144.84px;font-size:12px;line-height:12px;color:#6e6e6e;left:-5.50px;width:600px;text-align:center;-webkit-text-stroke:0.1px #6e6e6e;transform:scaleX(0.9);">78</div>
<div class="t" style="top:144.84px;font-size:12px;line-height:12px;color:#6e6e6e;left:46.50px;width:600px;text-align:center;-webkit-text-stroke:0.1px #6e6e6e;transform:scaleX(0.9);">80</div>
<div class="t" style="top:144.84px;font-size:12px;line-height:12px;color:#6e6e6e;left:98.50px;width:600px;text-align:center;-webkit-text-stroke:0.1px #6e6e6e;transform:scaleX(0.9);">82</div>
<div class="t" style="top:144.84px;font-size:12px;line-height:12px;color:#6e6e6e;left:151.50px;width:600px;text-align:center;-webkit-text-stroke:0.1px #6e6e6e;transform:scaleX(0.9);">84</div>
<div class="t" style="top:144.84px;font-size:12px;line-height:12px;color:#6e6e6e;left:203.50px;width:600px;text-align:center;-webkit-text-stroke:0.1px #6e6e6e;transform:scaleX(0.9);">86</div>
<div class="t" style="top:144.84px;font-size:12px;line-height:12px;color:#6e6e6e;left:256.50px;width:600px;text-align:center;-webkit-text-stroke:0.1px #6e6e6e;transform:scaleX(0.9);">88</div>
<div class="t" style="top:144.84px;font-size:12px;line-height:12px;color:#6e6e6e;left:308.50px;width:600px;text-align:center;-webkit-text-stroke:0.1px #6e6e6e;transform:scaleX(0.9);">90</div>
<div class="t" style="top:903.34px;font-size:12px;line-height:12px;color:#6e6e6e;left:-268.50px;width:600px;text-align:center;-webkit-text-stroke:0.1px #6e6e6e;transform:scaleX(0.9);">68</div>
<div class="t" style="top:903.34px;font-size:12px;line-height:12px;color:#6e6e6e;left:-215.50px;width:600px;text-align:center;-webkit-text-stroke:0.1px #6e6e6e;transform:scaleX(0.9);">70</div>
<div class="t" style="top:903.34px;font-size:12px;line-height:12px;color:#6e6e6e;left:-163.50px;width:600px;text-align:center;-webkit-text-stroke:0.1px #6e6e6e;transform:scaleX(0.9);">72</div>
<div class="t" style="top:903.34px;font-size:12px;line-height:12px;color:#6e6e6e;left:-110.50px;width:600px;text-align:center;-webkit-text-stroke:0.1px #6e6e6e;transform:scaleX(0.9);">74</div>
<div class="t" style="top:903.34px;font-size:12px;line-height:12px;color:#6e6e6e;left:-58.50px;width:600px;text-align:center;-webkit-text-stroke:0.1px #6e6e6e;transform:scaleX(0.9);">76</div>
<div class="t" style="top:903.34px;font-size:12px;line-height:12px;color:#6e6e6e;left:-5.50px;width:600px;text-align:center;-webkit-text-stroke:0.1px #6e6e6e;transform:scaleX(0.9);">78</div>
<div class="t" style="top:903.34px;font-size:12px;line-height:12px;color:#6e6e6e;left:46.50px;width:600px;text-align:center;-webkit-text-stroke:0.1px #6e6e6e;transform:scaleX(0.9);">80</div>
<div class="t" style="top:903.34px;font-size:12px;line-height:12px;color:#6e6e6e;left:98.50px;width:600px;text-align:center;-webkit-text-stroke:0.1px #6e6e6e;transform:scaleX(0.9);">82</div>
<div class="t" style="top:903.34px;font-size:12px;line-height:12px;color:#6e6e6e;left:151.50px;width:600px;text-align:center;-webkit-text-stroke:0.1px #6e6e6e;transform:scaleX(0.9);">84</div>
<div class="t" style="top:903.34px;font-size:12px;line-height:12px;color:#6e6e6e;left:203.50px;width:600px;text-align:center;-webkit-text-stroke:0.1px #6e6e6e;transform:scaleX(0.9);">86</div>
<div class="t" style="top:903.34px;font-size:12px;line-height:12px;color:#6e6e6e;left:256.50px;width:600px;text-align:center;-webkit-text-stroke:0.1px #6e6e6e;transform:scaleX(0.9);">88</div>
<div class="t" style="top:903.34px;font-size:12px;line-height:12px;color:#6e6e6e;left:308.50px;width:600px;text-align:center;-webkit-text-stroke:0.1px #6e6e6e;transform:scaleX(0.9);">90</div>
<div class="t" style="top:156.14px;font-size:12px;line-height:12px;color:#6e6e6e;right:551.00px;text-align:right;-webkit-text-stroke:0.1px #6e6e6e;transform:scaleX(0.9);transform-origin:100% 50%;">102</div>
<div class="t" style="top:208.14px;font-size:12px;line-height:12px;color:#6e6e6e;right:551.00px;text-align:right;-webkit-text-stroke:0.1px #6e6e6e;transform:scaleX(0.9);transform-origin:100% 50%;">100</div>
<div class="t" style="top:261.14px;font-size:12px;line-height:12px;color:#6e6e6e;right:551.00px;text-align:right;-webkit-text-stroke:0.1px #6e6e6e;transform:scaleX(0.9);transform-origin:100% 50%;">98</div>
<div class="t" style="top:313.14px;font-size:12px;line-height:12px;color:#6e6e6e;right:551.00px;text-align:right;-webkit-text-stroke:0.1px #6e6e6e;transform:scaleX(0.9);transform-origin:100% 50%;">96</div>
<div class="t" style="top:365.14px;font-size:12px;line-height:12px;color:#6e6e6e;right:551.00px;text-align:right;-webkit-text-stroke:0.1px #6e6e6e;transform:scaleX(0.9);transform-origin:100% 50%;">94</div>
<div class="t" style="top:418.14px;font-size:12px;line-height:12px;color:#6e6e6e;right:551.00px;text-align:right;-webkit-text-stroke:0.1px #6e6e6e;transform:scaleX(0.9);transform-origin:100% 50%;">92</div>
<div class="t" style="top:470.14px;font-size:12px;line-height:12px;color:#6e6e6e;right:551.00px;text-align:right;-webkit-text-stroke:0.1px #6e6e6e;transform:scaleX(0.9);transform-origin:100% 50%;">90</div>
<div class="t" style="top:523.14px;font-size:12px;line-height:12px;color:#6e6e6e;right:551.00px;text-align:right;-webkit-text-stroke:0.1px #6e6e6e;transform:scaleX(0.9);transform-origin:100% 50%;">88</div>
<div class="t" style="top:575.14px;font-size:12px;line-height:12px;color:#6e6e6e;right:551.00px;text-align:right;-webkit-text-stroke:0.1px #6e6e6e;transform:scaleX(0.9);transform-origin:100% 50%;">86</div>
<div class="t" style="top:628.14px;font-size:12px;line-height:12px;color:#6e6e6e;right:551.00px;text-align:right;-webkit-text-stroke:0.1px #6e6e6e;transform:scaleX(0.9);transform-origin:100% 50%;">84</div>
<div class="t" style="top:680.14px;font-size:12px;line-height:12px;color:#6e6e6e;right:551.00px;text-align:right;-webkit-text-stroke:0.1px #6e6e6e;transform:scaleX(0.9);transform-origin:100% 50%;">82</div>
<div class="t" style="top:733.14px;font-size:12px;line-height:12px;color:#6e6e6e;right:551.00px;text-align:right;-webkit-text-stroke:0.1px #6e6e6e;transform:scaleX(0.9);transform-origin:100% 50%;">80</div>
<div class="t" style="top:785.14px;font-size:12px;line-height:12px;color:#6e6e6e;right:551.00px;text-align:right;-webkit-text-stroke:0.1px #6e6e6e;transform:scaleX(0.9);transform-origin:100% 50%;">78</div>
<div class="t" style="top:837.14px;font-size:12px;line-height:12px;color:#6e6e6e;right:551.00px;text-align:right;-webkit-text-stroke:0.1px #6e6e6e;transform:scaleX(0.9);transform-origin:100% 50%;">76</div>
<div class="t" style="top:890.14px;font-size:12px;line-height:12px;color:#6e6e6e;right:551.00px;text-align:right;-webkit-text-stroke:0.1px #6e6e6e;transform:scaleX(0.9);transform-origin:100% 50%;">74</div>
<svg class="a" style="left:542px;top:138px;" width="1" height="767" viewBox="0 0 1 767"><path d="M0.5 0 V767" stroke="#000" stroke-width="1" stroke-dasharray="5 5" stroke-dashoffset="2"/></svg>
<svg class="a" style="left:0px;top:541px;" width="635" height="1" viewBox="0 0 635 1"><path d="M0 0.5 H635" stroke="#000" stroke-width="1" stroke-dasharray="5 4" /></svg>
<svg class="a" style="left:0px;top:0px;" width="640" height="300" viewBox="0 0 640 300"><path d="M253.2 210.8 Q275 207.5 296 205.8 Q320 204.8 345 205 L408 205.5 Q420 206 427 207.6 L461 211.3 L461 238.6 Q452 246 444.7 253.8 Q436 259.5 426.9 265.3 Q417 269.5 408 273.2 Q400 276 392.2 278 Q380 281.5 366 281.6 L345 282.1 Q338 280 334.2 278 Q326 271 318.5 266.4 Q312 264.5 307 263.8 L300 262 L290 259.5 Q280 258 270 258.5 L258 259.5 L253.2 236 Z" fill="#f6e800"/><path d="M328.5 241.8 Q342 240.5 356.5 242.3 L356.5 256 Q345 254.5 338 249 Q333 244.5 328.5 243.5 Z M266 258.5 Q280 257.2 296 259.2 L296 266 L266 266 Z M408 232.3 L416.5 232.8 L416.5 240 L408 244.3 Z M366 248 Q371 247 378 250.5 L378 253 Q372 251.5 366 252 Z" fill="#f7f7f7"/><g transform="matrix(1 0 0 0.964 0 9.33)"><text x="252.8" y="272.5" font-family="Liberation Sans" font-size="109" letter-spacing="-0.3" fill="#000" stroke="#000" stroke-width="1.4">ddd</text></g></svg>
<svg class="a" style="left:0px;top:300px;" width="640" height="150" viewBox="0 0 640 150"><rect x="352.10" y="6.00" width="1.8" height="132.00" fill="#000"/><rect x="378.40" y="84.80" width="1.8" height="53.20" fill="#000"/><rect x="404.40" y="84.80" width="1.8" height="53.20" fill="#000"/><rect x="430.50" y="84.80" width="1.8" height="53.20" fill="#000"/><rect x="456.80" y="84.80" width="1.8" height="53.20" fill="#000"/><rect x="483.10" y="45.70" width="1.8" height="92.30" fill="#000"/><rect x="509.40" y="84.80" width="1.8" height="53.20" fill="#000"/><rect x="535.70" y="84.80" width="1.8" height="53.20" fill="#000"/><rect x="561.70" y="84.80" width="1.8" height="53.20" fill="#000"/><rect x="587.80" y="84.80" width="1.8" height="53.20" fill="#000"/></svg>
<div class="a" style="left:635px;top:138px;width:547px;height:767px;background:#f0f0f0;"></div>
<div class="a" style="left:644px;top:135px;width:538px;height:19px;background:linear-gradient(90deg,#000 0%,#2a0808 20%,#6a1515 40%,#a52424 62%,#c53232 72%,#d05a30 100%);"></div>
<div class="t" style="top:140.18px;font-size:11.6px;line-height:11.6px;color:#fff;left:650.50px;">Variable Text</div>
<div class="t" style="top:161.18px;font-size:11.6px;line-height:11.6px;color:#000;right:374.50px;text-align:right;">Current:</div>
<div class="a" style="left:812px;top:156px;width:154px;height:21px;background:#fff;border:1px solid #a6a6a6;border-radius:3px;box-sizing:border-box;"></div>
<div class="a" style="left:951px;top:157px;width:1px;height:19px;background:#b0b0b0;"></div>
<svg class="a" style="left:954.0px;top:160.5px;" width="9" height="12" viewBox="0 0 9 12"><path d="M0.5 4 L4.5 0 L8.5 4 Z" fill="#555"/><path d="M0.5 8.3 L8.5 8.3 L4.5 12.3 Z" fill="#aaa"/></svg>
<div class="t" style="top:161.18px;font-size:11.6px;line-height:11.6px;color:#000;left:817.00px;">0</div>
<div class="t" style="top:186.18px;font-size:11.6px;line-height:11.6px;color:#000;right:374.50px;text-align:right;">Start:</div>
<div class="a" style="left:812px;top:181px;width:154px;height:21px;background:#fff;border:1px solid #a6a6a6;border-radius:3px;box-sizing:border-box;"></div>
<div class="a" style="left:951px;top:182px;width:1px;height:19px;background:#b0b0b0;"></div>
<svg class="a" style="left:954.0px;top:185.5px;" width="9" height="12" viewBox="0 0 9 12"><path d="M0.5 4 L4.5 0 L8.5 4 Z" fill="#555"/><path d="M0.5 8.3 L8.5 8.3 L4.5 12.3 Z" fill="#aaa"/></svg>
<div class="t" style="top:186.18px;font-size:11.6px;line-height:11.6px;color:#000;left:817.00px;">0</div>
<div class="t" style="top:210.68px;font-size:11.6px;line-height:11.6px;color:#000;right:374.50px;text-align:right;">End:</div>
<div class="a" style="left:812px;top:206px;width:154px;height:21px;background:#fff;border:1px solid #a6a6a6;border-radius:3px;box-sizing:border-box;"></div>
<div class="a" style="left:951px;top:207px;width:1px;height:19px;background:#b0b0b0;"></div>
<svg class="a" style="left:954.0px;top:210.5px;" width="9" height="12" viewBox="0 0 9 12"><path d="M0.5 4 L4.5 0 L8.5 4 Z" fill="#555"/><path d="M0.5 8.3 L8.5 8.3 L4.5 12.3 Z" fill="#555"/></svg>
<div class="t" style="top:211.18px;font-size:11.6px;line-height:11.6px;color:#000;left:817.00px;">450</div>
<div class="t" style="top:236.18px;font-size:11.6px;line-height:11.6px;color:#000;right:374.50px;text-align:right;">Advance by:</div>
<div class="a" style="left:812px;top:231px;width:154px;height:21px;background:#fff;border:1px solid #a6a6a6;border-radius:3px;box-sizing:border-box;"></div>
<div class="a" style="left:951px;top:232px;width:1px;height:19px;background:#b0b0b0;"></div>
<svg class="a" style="left:954.0px;top:235.5px;" width="9" height="12" viewBox="0 0 9 12"><path d="M0.5 4 L4.5 0 L8.5 4 Z" fill="#555"/><path d="M0.5 8.3 L8.5 8.3 L4.5 12.3 Z" fill="#aaa"/></svg>
<div class="t" style="top:236.18px;font-size:11.6px;line-height:11.6px;color:#000;left:817.00px;">1</div>
<div class="a" style="left:970px;top:155px;width:155px;height:23px;background:linear-gradient(#fdfdfd,#ebebeb);border:1px solid #b3b3b3;border-radius:3px;box-sizing:border-box;"></div>
<svg class="a" style="left:1017px;top:159px;" width="12" height="15" viewBox="0 0 12 15"><path d="M9.5 1.5 L3 7.5 L9.5 13.5" fill="none" stroke="#000" stroke-width="3.2"/></svg>
<div class="t" style="top:161.18px;font-size:11.6px;line-height:11.6px;color:#000;left:1033.00px;">Previous</div>
<div class="a" style="left:1129px;top:155px;width:71px;height:23px;background:linear-gradient(#fdfdfd,#ebebeb);border:1px solid #b3b3b3;border-radius:3px;box-sizing:border-box;"></div>
<div class="a" style="left:970px;top:180px;width:230px;height:23px;background:linear-gradient(#fdfdfd,#ebebeb);border:1px solid #b3b3b3;border-radius:3px;box-sizing:border-box;"></div>
<svg class="a" style="left:1106px;top:183px;" width="16" height="16" viewBox="0 0 16 16"><rect x="1" y="1" width="14" height="10" rx="1" fill="none" stroke="#000" stroke-width="2"/><rect x="7" y="11" width="2" height="2" fill="#000"/><rect x="4" y="13" width="8" height="2" fill="#000"/></svg>
<div class="t" style="top:186.18px;font-size:11.6px;line-height:11.6px;color:#000;left:1125.00px;">Test</div>
<div class="a" style="left:970px;top:204px;width:155px;height:24px;background:linear-gradient(#fdfdfd,#ebebeb);border:1px solid #b3b3b3;border-radius:3px;box-sizing:border-box;"></div>
<svg class="a" style="left:1022px;top:207px;" width="17" height="17" viewBox="0 0 17 17"><path d="M4 4.5 A6 6 0 1 1 8 15.5" fill="none" stroke="#000" stroke-width="2.8"/><path d="M1 1.5 L7.5 2 L3.5 7.5 Z" fill="#000"/></svg>
<div class="t" style="top:211.18px;font-size:11.6px;line-height:11.6px;color:#000;left:1041.50px;">Reset</div>
<div class="a" style="left:1129px;top:204px;width:71px;height:24px;background:linear-gradient(#fdfdfd,#ebebeb);border:1px solid #b3b3b3;border-radius:3px;box-sizing:border-box;"></div>
<svg class="a" style="left:1077px;top:236px;" width="16" height="10" viewBox="0 0 16 10"><rect x="6.5" y="1.4" width="8.8" height="7.2" rx="2" fill="#900000" stroke="#5a1010" stroke-width="0.9"/><rect x="0.6" y="0.6" width="7.2" height="8.8" rx="2.2" fill="#ddd5d5" stroke="#000" stroke-width="1.1"/></svg>
<div class="t" style="top:236.18px;font-size:11.6px;line-height:11.6px;color:#000;letter-spacing:0.3px;left:1099.50px;">Auto-Advance</div>
<div class="a" style="left:653px;top:254px;width:529px;height:1px;background:#a6a6a6;"></div>
<div class="a" style="left:653px;top:255px;width:529px;height:1px;background:#fafafa;"></div>
<div class="t" style="top:260.68px;font-size:11.6px;line-height:11.6px;color:#000;left:654.50px;">CSV File</div>
<div class="a" style="left:654px;top:278px;width:546px;height:31px;background:#ececec;border:1px solid #d4d4d4;border-radius:2px;box-sizing:border-box;"></div>
<div class="a" style="left:1026px;top:281px;width:123px;height:24px;background:linear-gradient(#fdfdfd,#ebebeb);border:1px solid #b3b3b3;border-radius:3px;box-sizing:border-box;"></div>
<div class="t" style="top:287.68px;font-size:11.6px;line-height:11.6px;color:#000;left:787.50px;width:600px;text-align:center;">Browse</div>
<div class="a" style="left:1151px;top:281px;width:49px;height:24px;background:linear-gradient(#fdfdfd,#ebebeb);border:1px solid #b3b3b3;border-radius:3px;box-sizing:border-box;"></div>
<div class="a" style="left:644px;top:459px;width:56px;height:24px;background:linear-gradient(#dcdcdc,#d0d0d0);border:1px solid #b3b3b3;border-radius:3px;box-sizing:border-box;"></div>
<div class="a" style="left:644px;top:492px;width:538px;height:19px;background:linear-gradient(90deg,#000 0%,#2a0808 20%,#6a1515 40%,#a52424 62%,#c53232 72%,#d05a30 100%);"></div>
<div class="t" style="top:496.68px;font-size:11.6px;line-height:11.6px;color:#fff;left:648.00px;">L</div>
<div class="t" style="top:515.68px;font-size:11.6px;line-height:11.6px;color:#000;left:645.50px;">Di</div>
<svg class="a" style="left:641px;top:522px;" width="1" height="17" viewBox="0 0 1 17"><rect x="0" y="0" width="1" height="1" fill="#bdbdbd"/><rect x="0" y="3" width="1" height="1" fill="#bdbdbd"/><rect x="0" y="6" width="1" height="1" fill="#bdbdbd"/><rect x="0" y="9" width="1" height="1" fill="#bdbdbd"/><rect x="0" y="12" width="1" height="1" fill="#bdbdbd"/><rect x="0" y="15" width="1" height="1" fill="#bdbdbd"/></svg>
<div class="a" style="left:645px;top:532px;width:55px;height:59px;background:linear-gradient(#fdfdfd,#ebebeb);border:1px solid #b3b3b3;border-radius:3px;box-sizing:border-box;"></div>
<div class="a" style="left:645px;top:591px;width:55px;height:61px;background:linear-gradient(#fdfdfd,#ebebeb);border:1px solid #b3b3b3;border-radius:3px;box-sizing:border-box;"></div>
<svg class="a" style="left:645px;top:659px;" width="16" height="10" viewBox="0 0 16 10"><rect x="6.5" y="1.4" width="8.8" height="7.2" rx="2" fill="#900000" stroke="#5a1010" stroke-width="0.9"/><rect x="0.6" y="0.6" width="7.2" height="8.8" rx="2.2" fill="#ddd5d5" stroke="#000" stroke-width="1.1"/></svg>
<svg class="a" style="left:645px;top:679px;" width="16" height="10" viewBox="0 0 16 10"><rect x="6.5" y="1.4" width="8.8" height="7.2" rx="2" fill="#900000" stroke="#5a1010" stroke-width="0.9"/><rect x="0.6" y="0.6" width="7.2" height="8.8" rx="2.2" fill="#ddd5d5" stroke="#000" stroke-width="1.1"/></svg>
<svg class="a" style="left:645px;top:701px;" width="16" height="10" viewBox="0 0 16 10"><rect x="0.6" y="1.4" width="8.8" height="7.2" rx="2" fill="#00e000" stroke="#1d5a1d" stroke-width="0.9"/><rect x="8.2" y="0.6" width="7.2" height="8.8" rx="2.2" fill="#e4ece4" stroke="#000" stroke-width="1.1"/></svg>
<div class="a" style="left:1160px;top:459px;width:22px;height:1px;background:#c8c8c8;"></div>
<div class="a" style="left:1160px;top:532px;width:40px;height:59px;background:linear-gradient(#fdfdfd,#ebebeb);border:1px solid #b3b3b3;border-radius:3px;box-sizing:border-box;"></div>
<svg class="a" style="left:1165px;top:555px;" width="13" height="14" viewBox="0 0 13 14"><path d="M0 0 L12 7 L0 14 Z" fill="#000"/></svg>
<div class="t" style="top:556.18px;font-size:11.6px;line-height:11.6px;color:#000;left:1179.00px;">Start</div>
<div class="a" style="left:1160px;top:591px;width:40px;height:61px;background:linear-gradient(#fdfdfd,#ebebeb);border:1px solid #b3b3b3;border-radius:3px;box-sizing:border-box;"></div>
<div class="a" style="left:1150px;top:694px;width:50px;height:24px;background:linear-gradient(#fdfdfd,#ebebeb);border:1px solid #b3b3b3;border-radius:3px;box-sizing:border-box;"></div>
<div class="t" style="top:701.68px;font-size:11.6px;line-height:11.6px;color:#000;left:1147.00px;">Position</div>
<div class="a" style="left:971px;top:718px;width:229px;height:25px;background:linear-gradient(#fdfdfd,#ebebeb);border:1px solid #b3b3b3;border-radius:3px;box-sizing:border-box;"></div>
<div class="t" style="top:724.88px;font-size:11.6px;line-height:11.6px;color:#000;letter-spacing:0.35px;left:1074.00px;">Optimization Settings</div>
<div class="a" style="left:645px;top:743px;width:80px;height:24px;background:linear-gradient(#fdfdfd,#ebebeb);border:1px solid #b3b3b3;border-radius:3px;box-sizing:border-box;"></div>
<div class="t" style="top:749.68px;font-size:11.6px;line-height:11.6px;color:#000;left:385.00px;width:600px;text-align:center;">Devices</div>
<div class="a" style="left:731px;top:743px;width:277px;height:24px;background:linear-gradient(#fdfdfd,#ececec);border:1px solid #b3b3b3;border-radius:3px;box-sizing:border-box;"></div>
<svg class="a" style="left:991.5px;top:752.0px;" width="10" height="6" viewBox="0 0 10 6"><path d="M0.5 0.5 L9.5 0.5 L5 5.5 Z" fill="#8c8c8c"/></svg>
<div class="t" style="top:749.68px;font-size:11.6px;line-height:11.6px;color:#000;left:736.00px;">(Auto)</div>
<div class="a" style="left:1014px;top:743px;width:186px;height:24px;background:linear-gradient(#fdfdfd,#ececec);border:1px solid #b3b3b3;border-radius:3px;box-sizing:border-box;"></div>
<svg class="a" style="left:1184px;top:752.0px;" width="10" height="6" viewBox="0 0 10 6"><path d="M0.5 0.5 L9.5 0.5 L5 5.5 Z" fill="#8c8c8c"/></svg>
<div class="t" style="top:749.68px;font-size:11.6px;line-height:11.6px;color:#000;left:1039.00px;">JCZFiber Flat Bed</div>
<svg class="a" style="left:1021px;top:747px;" width="14" height="16" viewBox="0 0 14 16"><path d="M1 1.5 Q7 -0.3 13 1.5 V9 Q13 13.5 7 15.6 Q1 13.5 1 9 Z" fill="#1c140a"/><path d="M1 1.5 Q7 -0.3 13 1.5 V4.3 Q7 3.1 1 4.3 Z" fill="#e6c41c"/><circle cx="7.2" cy="10" r="2.8" fill="#f0a018"/><path d="M4.2 8.8 L7 6.5 L7.6 4.8 L8.6 7.5 Z" fill="#f0a018"/></svg>
<div class="a" style="left:644px;top:895px;width:52px;height:10px;background:#f6f6f6;border-left:1px solid #b8b8b8;border-top:1px solid #b8b8b8;"></div>
<div class="a" style="left:696px;top:895px;width:105px;height:10px;background:#dadada;border:1px solid #b8b8b8;"></div>
<div class="t" style="top:901.18px;font-size:11.6px;line-height:11.6px;color:#000;left:708.00px;">Material Library</div>
<div class="t" style="top:901.18px;font-size:11.6px;line-height:11.6px;color:#000;left:656.00px;">Laser</div>
<div class="a" style="left:14px;top:478px;width:582px;height:380px;background:#f0f0f0;border:1px solid #5c5c5c;box-sizing:border-box;box-shadow:2px 5px 16px rgba(0,0,0,0.33);"></div>
<div class="a" style="left:15px;top:479px;width:580px;height:30px;background:#fff;"></div>
<svg class="a" style="left:23px;top:485px;" width="16" height="16" viewBox="0 0 16 16"><defs><linearGradient id="lbg23" x1="0" y1="0" x2="1" y2="1"><stop offset="0" stop-color="#2a1616"/><stop offset="0.45" stop-color="#7a1020"/><stop offset="1" stop-color="#ff2020"/></linearGradient></defs><rect x="0" y="0" width="16" height="16" rx="1.5" fill="url(#lbg23)"/><path d="M0.2 4 Q6 0.8 11.8 5.2" fill="none" stroke="#fff" stroke-width="1.5"/><path d="M1.7 11.6 L4.9 8.7 Q6.5 7.3 7.8 7.2 Q10 7.2 11.2 9.6 Q12.6 12.3 12.4 13.8 L11.9 16 H9 L8.7 12 Q7 13.3 5.3 13.2 Q3.5 12.8 1.7 11.6 Z" fill="#fff"/><circle cx="5" cy="11" r="0.8" fill="#8a1020"/></svg>
<div class="t" style="top:487.78px;font-size:11.6px;line-height:11.6px;color:#000;left:44.30px;">External Axis Setup - LightBurn Pro 2.0.02</div>
<svg class="a" style="left:574px;top:487px;" width="12" height="12" viewBox="0 0 12 12"><path d="M1 1 L11 11 M11 1 L1 11" stroke="#000" stroke-width="1.2"/></svg>
<div class="t" style="top:525.78px;font-size:11.6px;line-height:11.6px;color:#000;left:26.20px;">Motor #</div>
<svg class="a" style="left:118px;top:524px;" width="13" height="13" viewBox="0 0 13 13"><circle cx="6.5" cy="6.5" r="6" fill="#fff" stroke="#8f8f8f"/><circle cx="6.5" cy="6.5" r="3" fill="#333"/></svg>
<div class="t" style="top:525.78px;font-size:11.6px;line-height:11.6px;color:#000;left:138.70px;">Motor 1</div>
<svg class="a" style="left:210px;top:524px;" width="13" height="13" viewBox="0 0 13 13"><circle cx="6.5" cy="6.5" r="6" fill="#fff" stroke="#8f8f8f"/></svg>
<div class="t" style="top:525.78px;font-size:11.6px;line-height:11.6px;color:#000;left:230.50px;">Motor 2</div>
<div class="t" style="top:551.08px;font-size:11.6px;line-height:11.6px;color:#000;left:26.20px;">Axis type:</div>
<svg class="a" style="left:118px;top:549px;" width="13" height="13" viewBox="0 0 13 13"><circle cx="6.5" cy="6.5" r="6" fill="#fff" stroke="#8f8f8f"/></svg>
<div class="t" style="top:551.08px;font-size:11.6px;line-height:11.6px;color:#000;left:138.70px;">Rotating</div>
<svg class="a" style="left:210px;top:549px;" width="13" height="13" viewBox="0 0 13 13"><circle cx="6.5" cy="6.5" r="6" fill="#fff" stroke="#8f8f8f"/><circle cx="6.5" cy="6.5" r="3" fill="#333"/></svg>
<div class="t" style="top:551.08px;font-size:11.6px;line-height:11.6px;color:#000;left:230.50px;">Linear</div>
<div class="t" style="top:572.68px;font-size:11.6px;line-height:11.6px;color:#000;left:27.30px;">Axis Settings</div>
<div class="a" style="left:27px;top:590px;width:275px;height:209px;background:#ebebeb;border:1px solid #d6d6d6;border-radius:2px;box-sizing:border-box;"></div>
<svg class="a" style="left:130px;top:600px;" width="16" height="10" viewBox="0 0 16 10"><rect x="6.5" y="1.4" width="8.8" height="7.2" rx="2" fill="#900000" stroke="#5a1010" stroke-width="0.9"/><rect x="0.6" y="0.6" width="7.2" height="8.8" rx="2.2" fill="#ddd5d5" stroke="#000" stroke-width="1.1"/></svg>
<div class="t" style="top:599.48px;font-size:11.6px;line-height:11.6px;color:#000;left:152.40px;">Reverse direction</div>
<div class="t" style="top:623.68px;font-size:11.6px;line-height:11.6px;color:#000;right:1054.50px;text-align:right;">Steps per mm</div>
<div class="a" style="left:130px;top:618px;width:82px;height:22px;background:#fff;border:1px solid #a6a6a6;border-radius:3px;box-sizing:border-box;"></div>
<div class="a" style="left:197px;top:619px;width:1px;height:20px;background:#b0b0b0;"></div>
<svg class="a" style="left:200.0px;top:623.0px;" width="9" height="12" viewBox="0 0 9 12"><path d="M0.5 4 L4.5 0 L8.5 4 Z" fill="#555"/><path d="M0.5 8.3 L8.5 8.3 L4.5 12.3 Z" fill="#555"/></svg>
<div class="t" style="top:623.68px;font-size:11.6px;line-height:11.6px;color:#000;left:135.50px;">1000.0</div>
<div class="t" style="top:649.68px;font-size:11.6px;line-height:11.6px;color:#000;right:1054.50px;text-align:right;">Min Speed:</div>
<div class="a" style="left:130px;top:644px;width:82px;height:22px;background:#fff;border:1px solid #a6a6a6;border-radius:3px;box-sizing:border-box;"></div>
<div class="a" style="left:197px;top:645px;width:1px;height:20px;background:#b0b0b0;"></div>
<svg class="a" style="left:200.0px;top:649.0px;" width="9" height="12" viewBox="0 0 9 12"><path d="M0.5 4 L4.5 0 L8.5 4 Z" fill="#555"/><path d="M0.5 8.3 L8.5 8.3 L4.5 12.3 Z" fill="#555"/></svg>
<div class="t" style="top:649.68px;font-size:11.6px;line-height:11.6px;color:#000;left:135.50px;">500</div>
<div class="t" style="top:649.68px;font-size:11.6px;line-height:11.6px;color:#000;left:214.20px;">Steps/sec</div>
<div class="t" style="top:675.68px;font-size:11.6px;line-height:11.6px;color:#000;right:1054.50px;text-align:right;">Max Speed:</div>
<div class="a" style="left:130px;top:670px;width:82px;height:22px;background:#fff;border:1px solid #a6a6a6;border-radius:3px;box-sizing:border-box;"></div>
<div class="a" style="left:197px;top:671px;width:1px;height:20px;background:#b0b0b0;"></div>
<svg class="a" style="left:200.0px;top:675.0px;" width="9" height="12" viewBox="0 0 9 12"><path d="M0.5 4 L4.5 0 L8.5 4 Z" fill="#555"/><path d="M0.5 8.3 L8.5 8.3 L4.5 12.3 Z" fill="#555"/></svg>
<div class="t" style="top:675.68px;font-size:11.6px;line-height:11.6px;color:#000;left:135.50px;">8000</div>
<div class="t" style="top:675.68px;font-size:11.6px;line-height:11.6px;color:#000;left:214.20px;">Steps/sec</div>
<div class="t" style="top:701.68px;font-size:11.6px;line-height:11.6px;color:#000;right:1054.50px;text-align:right;">Acceleration time:</div>
<div class="a" style="left:130px;top:696px;width:82px;height:22px;background:#fff;border:1px solid #a6a6a6;border-radius:3px;box-sizing:border-box;"></div>
<div class="a" style="left:197px;top:697px;width:1px;height:20px;background:#b0b0b0;"></div>
<svg class="a" style="left:200.0px;top:701.0px;" width="9" height="12" viewBox="0 0 9 12"><path d="M0.5 4 L4.5 0 L8.5 4 Z" fill="#555"/><path d="M0.5 8.3 L8.5 8.3 L4.5 12.3 Z" fill="#555"/></svg>
<div class="t" style="top:701.68px;font-size:11.6px;line-height:11.6px;color:#000;left:135.50px;">100</div>
<div class="t" style="top:701.68px;font-size:11.6px;line-height:11.6px;color:#000;left:214.20px;">ms</div>
<svg class="a" style="left:130px;top:726px;" width="16" height="10" viewBox="0 0 16 10"><rect x="0.6" y="1.4" width="8.8" height="7.2" rx="2" fill="#00e000" stroke="#1d5a1d" stroke-width="0.9"/><rect x="8.2" y="0.6" width="7.2" height="8.8" rx="2.2" fill="#e4ece4" stroke="#000" stroke-width="1.1"/></svg>
<div class="t" style="top:725.88px;font-size:11.6px;line-height:11.6px;color:#000;left:152.00px;">Return to start position</div>
<div class="t" style="top:750.68px;font-size:11.6px;line-height:11.6px;color:#000;right:1054.50px;text-align:right;">Return Speed:</div>
<div class="a" style="left:130px;top:744px;width:82px;height:22px;background:#fff;border:1px solid #a6a6a6;border-radius:3px;box-sizing:border-box;"></div>
<div class="a" style="left:197px;top:745px;width:1px;height:20px;background:#b0b0b0;"></div>
<svg class="a" style="left:200.0px;top:749.0px;" width="9" height="12" viewBox="0 0 9 12"><path d="M0.5 4 L4.5 0 L8.5 4 Z" fill="#555"/><path d="M0.5 8.3 L8.5 8.3 L4.5 12.3 Z" fill="#555"/></svg>
<div class="t" style="top:749.68px;font-size:11.6px;line-height:11.6px;color:#000;left:135.50px;">8000</div>
<div class="t" style="top:750.68px;font-size:11.6px;line-height:11.6px;color:#000;left:214.20px;">Steps/sec</div>
<div class="a" style="left:32px;top:769px;width:264px;height:24px;background:linear-gradient(#fdfdfd,#ebebeb);border:1px solid #b3b3b3;border-radius:3px;box-sizing:border-box;"></div>
<div class="t" style="top:775.68px;font-size:11.6px;line-height:11.6px;color:#000;left:-136.00px;width:600px;text-align:center;">Test</div>
<div class="t" style="top:572.98px;font-size:11.6px;line-height:11.6px;color:#000;left:309.40px;">Homing</div>
<div class="a" style="left:309px;top:590px;width:275px;height:102px;background:#ebebeb;border:1px solid #d6d6d6;border-radius:2px;box-sizing:border-box;"></div>
<svg class="a" style="left:320px;top:606px;" width="16" height="10" viewBox="0 0 16 10"><rect x="6.5" y="1.4" width="8.8" height="7.2" rx="2" fill="#900000" stroke="#5a1010" stroke-width="0.9"/><rect x="0.6" y="0.6" width="7.2" height="8.8" rx="2.2" fill="#ddd5d5" stroke="#000" stroke-width="1.1"/></svg>
<div class="t" style="top:605.98px;font-size:11.6px;line-height:11.6px;color:#000;left:342.40px;">Home on start</div>
<div class="t" style="top:634.18px;font-size:11.6px;line-height:11.6px;color:#000;right:782.50px;text-align:right;">Speed:</div>
<div class="a" style="left:406px;top:628px;width:80px;height:22px;background:#efefef;border:1px solid #b8b8b8;border-radius:3px;box-sizing:border-box;"></div>
<div class="a" style="left:471px;top:629px;width:1px;height:20px;background:#c4c4c4;"></div>
<svg class="a" style="left:474.0px;top:633.0px;" width="9" height="12" viewBox="0 0 9 12"><path d="M0.5 4 L4.5 0 L8.5 4 Z" fill="#a8a8a8"/><path d="M0.5 8.3 L8.5 8.3 L4.5 12.3 Z" fill="#a8a8a8"/></svg>
<div class="t" style="top:633.68px;font-size:11.6px;line-height:11.6px;color:#8a8a8a;left:411.00px;">500</div>
<div class="t" style="top:634.18px;font-size:11.6px;line-height:11.6px;color:#000;left:492.00px;">Steps/sec</div>
<div class="t" style="top:663.68px;font-size:11.6px;line-height:11.6px;color:#000;right:782.50px;text-align:right;">Timeout:</div>
<div class="a" style="left:406px;top:658px;width:80px;height:22px;background:#efefef;border:1px solid #b8b8b8;border-radius:3px;box-sizing:border-box;"></div>
<div class="a" style="left:471px;top:659px;width:1px;height:20px;background:#c4c4c4;"></div>
<svg class="a" style="left:474.0px;top:663.0px;" width="9" height="12" viewBox="0 0 9 12"><path d="M0.5 4 L4.5 0 L8.5 4 Z" fill="#a8a8a8"/><path d="M0.5 8.3 L8.5 8.3 L4.5 12.3 Z" fill="#a8a8a8"/></svg>
<div class="t" style="top:663.68px;font-size:11.6px;line-height:11.6px;color:#8a8a8a;left:411.00px;">10</div>
<div class="t" style="top:663.68px;font-size:11.6px;line-height:11.6px;color:#000;left:492.00px;">Seconds</div>
<div class="a" style="left:418px;top:822px;width:80px;height:24px;background:linear-gradient(#edf4fb,#dfe8f1);border:1px solid #4aa3ea;border-radius:3px;box-sizing:border-box;"></div>
<div class="t" style="top:828.68px;font-size:11.6px;line-height:11.6px;color:#000;left:158.00px;width:600px;text-align:center;">OK</div>
<div class="a" style="left:504px;top:822px;width:80px;height:24px;background:linear-gradient(#fdfdfd,#ebebeb);border:1px solid #b3b3b3;border-radius:3px;box-sizing:border-box;"></div>
<div class="t" style="top:828.68px;font-size:11.6px;line-height:11.6px;color:#000;left:244.00px;width:600px;text-align:center;">Cancel</div>
<div class="a" style="left:656px;top:365px;width:509px;height:366px;background:#f0f0f0;border:1px solid #8c8c8c;box-sizing:border-box;box-shadow:0 4px 14px rgba(0,0,0,0.22);"></div>
<div class="a" style="left:657px;top:366px;width:507px;height:30px;background:#fff;"></div>
<svg class="a" style="left:665px;top:372px;" width="16" height="16" viewBox="0 0 16 16"><defs><linearGradient id="lbg665" x1="0" y1="0" x2="1" y2="1"><stop offset="0" stop-color="#2a1616"/><stop offset="0.45" stop-color="#7a1020"/><stop offset="1" stop-color="#ff2020"/></linearGradient></defs><rect x="0" y="0" width="16" height="16" rx="1.5" fill="url(#lbg665)"/><path d="M0.2 4 Q6 0.8 11.8 5.2" fill="none" stroke="#fff" stroke-width="1.5"/><path d="M1.7 11.6 L4.9 8.7 Q6.5 7.3 7.8 7.2 Q10 7.2 11.2 9.6 Q12.6 12.3 12.4 13.8 L11.9 16 H9 L8.7 12 Q7 13.3 5.3 13.2 Q3.5 12.8 1.7 11.6 Z" fill="#fff"/><circle cx="5" cy="11" r="0.8" fill="#8a1020"/></svg>
<div class="t" style="top:375.18px;font-size:11.6px;line-height:11.6px;color:#9a9a9a;left:686.40px;">Repeat Marking - LightBurn Pro 2.0.02</div>
<svg class="a" style="left:1143px;top:374px;" width="12" height="12" viewBox="0 0 12 12"><path d="M1 1 L11 11 M11 1 L1 11" stroke="#7a7a7a" stroke-width="1.1"/></svg>
<div class="t" style="top:410.18px;font-size:11.6px;line-height:11.6px;color:#000;left:669.00px;">Setup</div>
<div class="a" style="left:669px;top:427px;width:319px;height:148px;background:#ebebeb;border:1px solid #d6d6d6;border-radius:2px;box-sizing:border-box;"></div>
<div class="a" style="left:673px;top:439px;width:161px;height:22px;background:#fff;border:1px solid #a6a6a6;border-radius:3px;box-sizing:border-box;"></div>
<div class="a" style="left:819px;top:440px;width:1px;height:20px;background:#b0b0b0;"></div>
<svg class="a" style="left:822.0px;top:444.0px;" width="9" height="12" viewBox="0 0 9 12"><path d="M0.5 4 L4.5 0 L8.5 4 Z" fill="#555"/><path d="M0.5 8.3 L8.5 8.3 L4.5 12.3 Z" fill="#555"/></svg>
<div class="t" style="top:444.68px;font-size:11.6px;line-height:11.6px;color:#000;right:369.00px;text-align:right;">450</div>
<div class="t" style="top:445.18px;font-size:11.6px;line-height:11.6px;color:#000;left:837.50px;">Count</div>
<div class="a" style="left:673px;top:470px;width:161px;height:22px;background:#fff;border:1px solid #a6a6a6;border-radius:3px;box-sizing:border-box;"></div>
<div class="a" style="left:819px;top:471px;width:1px;height:20px;background:#b0b0b0;"></div>
<svg class="a" style="left:822.0px;top:475.0px;" width="9" height="12" viewBox="0 0 9 12"><path d="M0.5 4 L4.5 0 L8.5 4 Z" fill="#555"/><path d="M0.5 8.3 L8.5 8.3 L4.5 12.3 Z" fill="#555"/></svg>
<div class="t" style="top:475.68px;font-size:11.6px;line-height:11.6px;color:#000;right:369.00px;text-align:right;">10.00deg</div>
<div class="t" style="top:476.18px;font-size:11.6px;line-height:11.6px;color:#000;left:837.50px;">Increment</div>
<div class="a" style="left:903px;top:469px;width:80px;height:24px;background:linear-gradient(#fdfdfd,#ebebeb);border:1px solid #b3b3b3;border-radius:3px;box-sizing:border-box;"></div>
<div class="t" style="top:475.68px;font-size:11.6px;line-height:11.6px;color:#8a8a8a;left:643.00px;width:600px;text-align:center;">Calculate</div>
<div class="a" style="left:673px;top:501px;width:161px;height:22px;background:#fff;border:1px solid #a6a6a6;border-radius:3px;box-sizing:border-box;"></div>
<div class="a" style="left:819px;top:502px;width:1px;height:20px;background:#b0b0b0;"></div>
<svg class="a" style="left:822.0px;top:506.0px;" width="9" height="12" viewBox="0 0 9 12"><path d="M0.5 4 L4.5 0 L8.5 4 Z" fill="#555"/><path d="M0.5 8.3 L8.5 8.3 L4.5 12.3 Z" fill="#555"/></svg>
<div class="t" style="top:506.68px;font-size:11.6px;line-height:11.6px;color:#000;right:369.00px;text-align:right;">50ms</div>
<div class="t" style="top:506.78px;font-size:11.6px;line-height:11.6px;color:#000;left:837.50px;">Pause after move</div>
<div class="a" style="left:673px;top:531px;width:310px;height:1px;background:#a0a0a0;"></div>
<div class="a" style="left:673px;top:532px;width:310px;height:1px;background:#fbfbfb;"></div>
<div class="t" style="top:548.18px;font-size:11.6px;line-height:11.6px;color:#000;right:348.00px;text-align:right;">Completed:</div>
<div class="a" style="left:837px;top:542px;width:63px;height:22px;background:#fff;border:1px solid #a6a6a6;border-radius:3px;box-sizing:border-box;"></div>
<div class="a" style="left:885px;top:543px;width:1px;height:20px;background:#b0b0b0;"></div>
<svg class="a" style="left:888.0px;top:547.0px;" width="9" height="12" viewBox="0 0 9 12"><path d="M0.5 4 L4.5 0 L8.5 4 Z" fill="#555"/><path d="M0.5 8.3 L8.5 8.3 L4.5 12.3 Z" fill="#aaa"/></svg>
<div class="t" style="top:547.68px;font-size:11.6px;line-height:11.6px;color:#000;left:842.00px;">0</div>
<div class="a" style="left:903px;top:541px;width:80px;height:24px;background:linear-gradient(#fdfdfd,#ebebeb);border:1px solid #b3b3b3;border-radius:3px;box-sizing:border-box;"></div>
<div class="t" style="top:547.68px;font-size:11.6px;line-height:11.6px;color:#000;left:643.00px;width:600px;text-align:center;">Clear</div>
<div class="t" style="top:415.68px;font-size:11.6px;line-height:11.6px;color:#000;left:991.20px;">Pos: 0.00mm</div>
<div class="a" style="left:991px;top:439px;width:162px;height:22px;background:#fff;border:1px solid #a6a6a6;border-radius:3px;box-sizing:border-box;"></div>
<div class="a" style="left:1138px;top:440px;width:1px;height:20px;background:#b0b0b0;"></div>
<svg class="a" style="left:1141.0px;top:444.0px;" width="9" height="12" viewBox="0 0 9 12"><path d="M0.5 4 L4.5 0 L8.5 4 Z" fill="#555"/><path d="M0.5 8.3 L8.5 8.3 L4.5 12.3 Z" fill="#555"/></svg>
<div class="t" style="top:444.68px;font-size:11.6px;line-height:11.6px;color:#000;right:49.00px;text-align:right;">5.00mm</div>
<div class="a" style="left:991px;top:465px;width:162px;height:24px;background:linear-gradient(#fdfdfd,#ebebeb);border:1px solid #b3b3b3;border-radius:3px;box-sizing:border-box;"></div>
<div class="t" style="top:471.68px;font-size:11.6px;line-height:11.6px;color:#000;left:772.00px;width:600px;text-align:center;">Go to Zero</div>
<div class="a" style="left:991px;top:492px;width:80px;height:24px;background:linear-gradient(#fdfdfd,#ebebeb);border:1px solid #b3b3b3;border-radius:3px;box-sizing:border-box;"></div>
<div class="t" style="top:498.68px;font-size:11.6px;line-height:11.6px;color:#000;left:731.00px;width:600px;text-align:center;">Jog &lt;&lt;</div>
<div class="a" style="left:1074px;top:492px;width:79px;height:24px;background:linear-gradient(#fdfdfd,#ebebeb);border:1px solid #b3b3b3;border-radius:3px;box-sizing:border-box;"></div>
<div class="t" style="top:498.68px;font-size:11.6px;line-height:11.6px;color:#000;left:813.50px;width:600px;text-align:center;">Jog &gt;&gt;</div>
<div class="a" style="left:991px;top:551px;width:162px;height:24px;background:linear-gradient(#fdfdfd,#ebebeb);border:1px solid #b3b3b3;border-radius:3px;box-sizing:border-box;"></div>
<div class="t" style="top:557.68px;font-size:11.6px;line-height:11.6px;color:#000;left:772.00px;width:600px;text-align:center;">Set Zero</div>
<div class="a" style="left:668px;top:609px;width:159px;height:40px;background:linear-gradient(#fdfdfd,#ebebeb);border:1px solid #b3b3b3;border-radius:3px;box-sizing:border-box;"></div>
<svg class="a" style="left:726px;top:621px;" width="14" height="16" viewBox="0 0 14 16"><path d="M0 0 L13.6 8 L0 16 Z" fill="#000"/></svg>
<div class="t" style="top:624.18px;font-size:11.6px;line-height:11.6px;color:#000;left:743.00px;">Start</div>
<div class="a" style="left:830px;top:609px;width:158px;height:40px;background:linear-gradient(#fdfdfd,#ebebeb);border:1px solid #b3b3b3;border-radius:3px;box-sizing:border-box;"></div>
<svg class="a" style="left:884px;top:621px;" width="15" height="16" viewBox="0 0 15 16"><rect x="0" y="0" width="4.8" height="16" rx="0.8" fill="#000"/><rect x="9" y="0" width="5.2" height="16" rx="0.8" fill="#000"/></svg>
<div class="t" style="top:624.18px;font-size:11.6px;line-height:11.6px;color:#000;left:901.60px;">Pause</div>
<div class="a" style="left:991px;top:609px;width:162px;height:40px;background:linear-gradient(#fdfdfd,#ebebeb);border:1px solid #b3b3b3;border-radius:3px;box-sizing:border-box;"></div>
<svg class="a" style="left:1050px;top:621px;" width="16" height="16" viewBox="0 0 16 16"><rect x="0" y="0" width="16" height="16" rx="1" fill="#000"/></svg>
<div class="t" style="top:624.18px;font-size:11.6px;line-height:11.6px;color:#000;left:1068.20px;">Stop</div>
<div class="a" style="left:830px;top:652px;width:158px;height:40px;background:linear-gradient(#fdfdfd,#ebebeb);border:1px solid #b3b3b3;border-radius:3px;box-sizing:border-box;"></div>
<svg class="a" style="left:881px;top:664px;" width="17" height="16" viewBox="0 0 17 16"><path d="M1.35 7 V1.35 H8 M10 1.35 H16.65 V7 M16.65 9 V14.65 H10 M8 14.65 H1.35 V9" fill="none" stroke="#000" stroke-width="2.7"/></svg>
<div class="t" style="top:667.18px;font-size:11.6px;line-height:11.6px;color:#000;left:900.00px;">Frame</div>
<div class="a" style="left:668px;top:695px;width:159px;height:24px;background:linear-gradient(#fdfdfd,#ebebeb);border:1px solid #b3b3b3;border-radius:3px;box-sizing:border-box;"></div>
<div class="t" style="top:701.68px;font-size:11.6px;line-height:11.6px;color:#000;left:447.50px;width:600px;text-align:center;">Setup</div>
<div class="a" style="left:1073px;top:695px;width:80px;height:24px;background:linear-gradient(#fdfdfd,#ebebeb);border:1px solid #b3b3b3;border-radius:3px;box-sizing:border-box;"></div>
<div class="t" style="top:701.68px;font-size:11.6px;line-height:11.6px;color:#000;left:813.00px;width:600px;text-align:center;">Close</div>
</body></html>
